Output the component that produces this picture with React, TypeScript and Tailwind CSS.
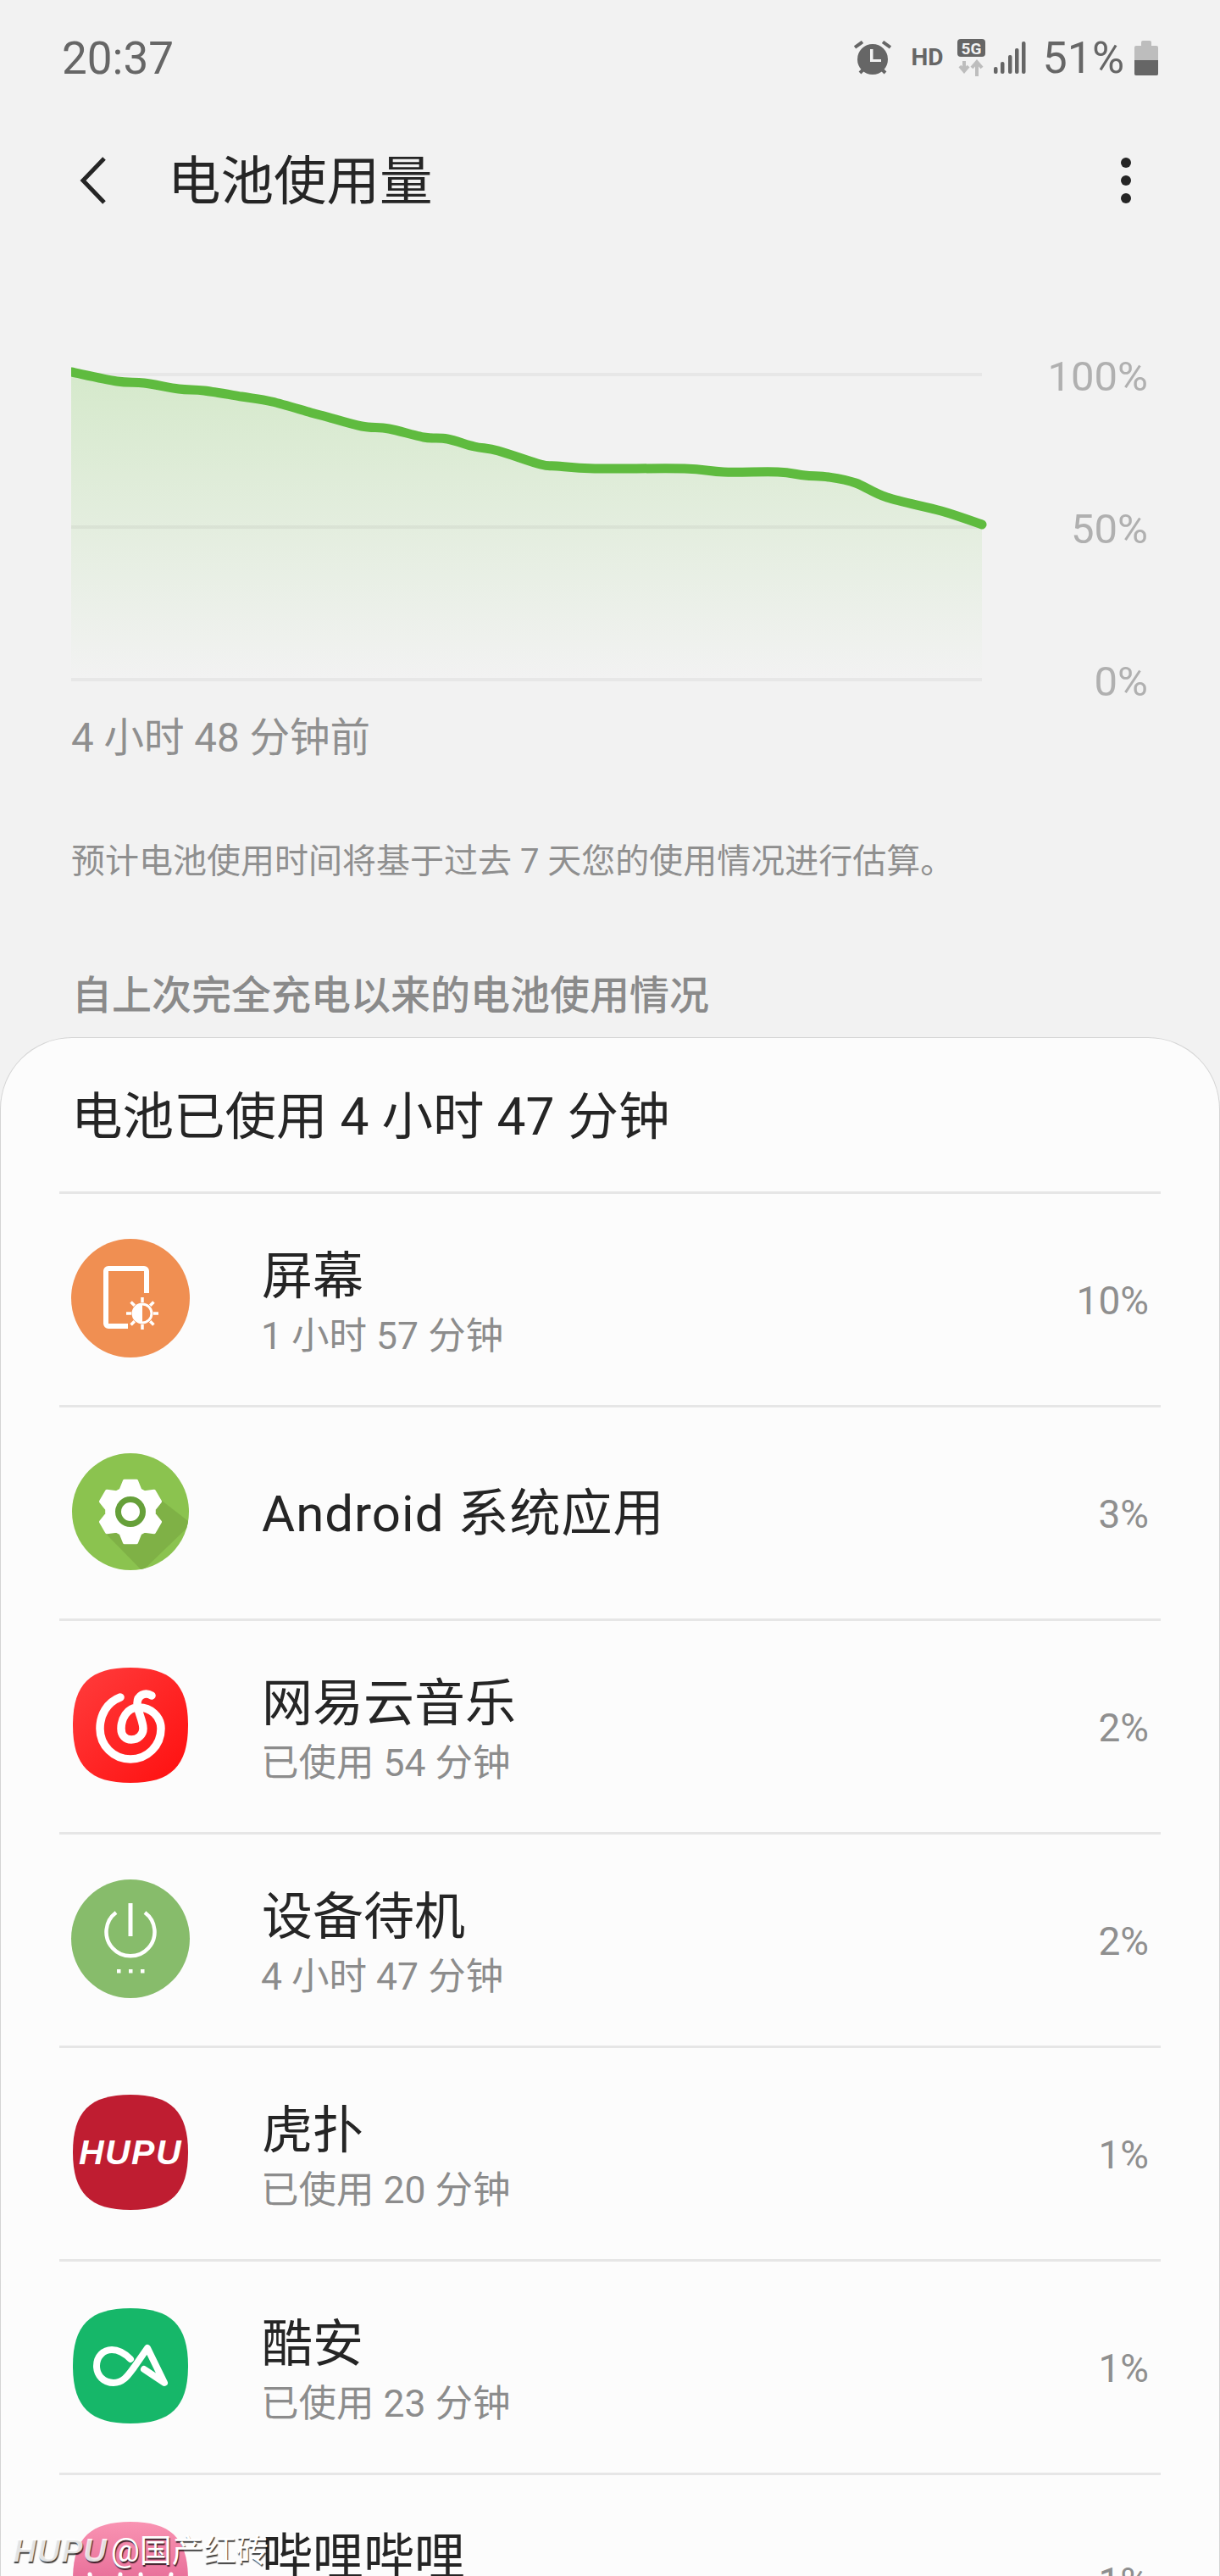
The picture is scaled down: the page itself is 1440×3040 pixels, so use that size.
import type { ReactNode } from 'react'

const CURVE: [number, number][] = [
  [84, 439], [138, 450], [170, 452], [211, 459], [241, 461], [285, 468], [321, 474],
  [367, 487], [386, 492], [427, 503], [459, 506], [500, 516], [528, 518], [560, 527],
  [588, 532], [638, 548], [657, 550], [702, 553], [808, 553], [854, 557], [918, 557],
  [950, 561], [978, 563], [1010, 570], [1047, 587], [1111, 603], [1159, 619],
]

// catmull-rom so the line goes through every measured point
function smoothPath(pts: [number, number][]) {
  let d = `M${pts[0][0]} ${pts[0][1]}`
  for (let i = 0; i < pts.length - 1; i++) {
    const p0 = pts[Math.max(i - 1, 0)]
    const p1 = pts[i]
    const p2 = pts[i + 1]
    const p3 = pts[Math.min(i + 2, pts.length - 1)]
    const c1x = p1[0] + (p2[0] - p0[0]) / 6
    const c1y = p1[1] + (p2[1] - p0[1]) / 6
    const c2x = p2[0] - (p3[0] - p1[0]) / 6
    const c2y = p2[1] - (p3[1] - p1[1]) / 6
    d += ` C${c1x.toFixed(1)} ${c1y.toFixed(1)} ${c2x.toFixed(1)} ${c2y.toFixed(1)} ${p2[0]} ${p2[1]}`
  }
  return d
}

function gearPath(cx: number, cy: number) {
  const pts: string[] = []
  for (let k = 0; k < 6; k++) {
    const a = k * 60 - 90
    const steps: [number, number][] = [[28, a - 24], [37, a - 11], [37, a + 11], [28, a + 24]]
    for (const [r, deg] of steps) {
      const t = (deg * Math.PI) / 180
      pts.push(`${(cx + r * Math.cos(t)).toFixed(1)},${(cy + r * Math.sin(t)).toFixed(1)}`)
    }
  }
  return pts.join(' ')
}

const SQUIRCLE = 'M68 0C116 0 136 20 136 68C136 116 116 136 68 136C20 136 0 116 0 68C0 20 20 0 68 0Z'

function ScreenIcon() {
  const rays = [0, 45, 90, 135, 180, 225, 270, 315]
  return (
    <svg width="140" height="140" viewBox="0 0 140 140">
      <circle cx="70" cy="70" r="70" fill="#f08f52" />
      <path d="M89 64V38a3 3 0 0 0-3-3H44a3 3 0 0 0-3 3V100a3 3 0 0 0 3 3H67" fill="none" stroke="#fff" strokeWidth="6" />
      <circle cx="84" cy="88" r="11" fill="#f08f52" stroke="#fff" strokeWidth="3" />
      <path d="M84 77a11 11 0 0 0 0 22Z" fill="#fff" />
      {rays.map((deg) => (
        <line
          key={deg}
          x1={84 + 13 * Math.cos((deg * Math.PI) / 180)}
          y1={88 + 13 * Math.sin((deg * Math.PI) / 180)}
          x2={84 + 19 * Math.cos((deg * Math.PI) / 180)}
          y2={88 + 19 * Math.sin((deg * Math.PI) / 180)}
          stroke="#fff"
          strokeWidth="3.5"
        />
      ))}
    </svg>
  )
}

function AndroidIcon() {
  return (
    <svg width="140" height="140" viewBox="0 0 140 140">
      <defs>
        <clipPath id="android-clip">
          <circle cx="70" cy="70" r="69" />
        </clipPath>
      </defs>
      <circle cx="70" cy="70" r="69" fill="#8bc34f" />
      <polygon points="40,95 84,140 142,84 107,57" fill="#7fb146" clipPath="url(#android-clip)" />
      <polygon points={gearPath(70, 70)} fill="#fff" stroke="#fff" strokeWidth="4" strokeLinejoin="round" />
      <circle cx="70" cy="70" r="14.5" fill="#fff" stroke="#66a03a" strokeWidth="7" />
    </svg>
  )
}

function MusicIcon() {
  return (
    <svg width="136" height="136" viewBox="0 0 136 136">
      <defs>
        <linearGradient id="netease" x1="0" y1="0" x2="1" y2="1">
          <stop offset="0" stopColor="#ff3d3d" />
          <stop offset="1" stopColor="#ff0f0f" />
        </linearGradient>
      </defs>
      <path d={SQUIRCLE} fill="url(#netease)" />
      <path
        d="M56 35C40 41 32 56 32 72C32 92 48 108 68 108C88 108 104 92 104 72C104 58 92 46 76 47C64 48 57 60 57 72C57 80 62 85 69 85C77 85 83 79 83 72C83 62 76 52 76 42C76 33 85 28 93 33"
        fill="none"
        stroke="#fff"
        strokeWidth="9.5"
        strokeLinecap="round"
      />
    </svg>
  )
}

function StandbyIcon() {
  return (
    <svg width="140" height="140" viewBox="0 0 140 140">
      <circle cx="70" cy="70" r="70" fill="#87bc6b" />
      <rect x="67.5" y="28" width="5" height="39" fill="#fff" />
      <path d="M53 39A28.5 28.5 0 1 0 87 39" fill="none" stroke="#fff" strokeWidth="4.5" />
      <rect x="54" y="106" width="4.5" height="4.5" fill="#fff" />
      <rect x="68" y="106" width="4.5" height="4.5" fill="#fff" />
      <rect x="82" y="106" width="4.5" height="4.5" fill="#fff" />
    </svg>
  )
}

function HupuIcon() {
  return (
    <svg width="136" height="136" viewBox="0 0 136 136">
      <path d={SQUIRCLE} fill="#bf1d31" />
      <text x="68" y="82" textAnchor="middle" fill="#fff" fontFamily="Liberation Sans" fontWeight="700" fontStyle="italic" fontSize="41" letterSpacing="1.5">
        HUPU
      </text>
    </svg>
  )
}

function CoolapkIcon() {
  return (
    <svg width="136" height="136" viewBox="0 0 136 136">
      <path d={SQUIRCLE} fill="#16b769" />
      <path
        d="M68 60C60 52 53 49 46 49C36 49 28 57 28 68C28 80 37 88 48 88C60 88 66 78 72 70L88 47L108 88L84 72"
        fill="none"
        stroke="#fff"
        strokeWidth="8"
        strokeLinejoin="round"
        strokeLinecap="round"
      />
    </svg>
  )
}

function BiliIcon() {
  return (
    <svg width="136" height="136" viewBox="0 0 136 136">
      <defs>
        <linearGradient id="bili" x1="0" y1="0" x2="0" y2="1">
          <stop offset="0" stopColor="#f993b2" />
          <stop offset="0.5" stopColor="#e8709a" />
          <stop offset="1" stopColor="#e8709a" />
        </linearGradient>
      </defs>
      <path d={SQUIRCLE} fill="url(#bili)" />
      <path d="M20 62L24 84M56 62L54 84M80 62L82 84M116 62L112 84" stroke="#fff" strokeWidth="5" strokeLinecap="round" />
    </svg>
  )
}

type Row = { icon: ReactNode; title: string; sub?: string; pct: string }

const ROWS: Row[] = [
  { icon: <ScreenIcon />, title: '屏幕', sub: '1 小时 57 分钟', pct: '10%' },
  { icon: <AndroidIcon />, title: 'Android 系统应用', pct: '3%' },
  { icon: <MusicIcon />, title: '网易云音乐', sub: '已使用 54 分钟', pct: '2%' },
  { icon: <StandbyIcon />, title: '设备待机', sub: '4 小时 47 分钟', pct: '2%' },
  { icon: <HupuIcon />, title: '虎扑', sub: '已使用 20 分钟', pct: '1%' },
  { icon: <CoolapkIcon />, title: '酷安', sub: '已使用 23 分钟', pct: '1%' },
  { icon: <BiliIcon />, title: '哔哩哔哩', sub: '已使用 11 分钟', pct: '1%' },
]

function StatusBar() {
  return (
    <div className="h-[138px] pb-[2px] shrink-0 flex items-center justify-between pl-[73px] pr-[73px] text-[#666666]">
      <span className="text-[53px] leading-none mt-[2px]">20:37</span>
      <div className="flex items-center">
        <svg width="44" height="41" viewBox="0 0 44 41">
          <circle cx="22" cy="22" r="18" fill="#666" />
          <path d="M12 33L7 38M32 33L37 38M1 8L10 1.5M34 1.5L43 8" stroke="#666" strokeWidth="4" />
          <path d="M19 10h3.5v12H32v3H19z" fill="#f2f2f2" />
        </svg>
        <span className="ml-[23px] w-[35px] text-[28px] leading-none font-bold">HD</span>
        <svg className="ml-[20px]" width="33" height="44" viewBox="0 0 33 44">
          <rect x="0" y="0" width="33" height="21" rx="4" fill="#666" />
          <text x="16.5" y="17.5" textAnchor="middle" fill="#f2f2f2" fontFamily="Roboto" fontWeight="700" fontSize="19">5G</text>
          <path d="M8 26v10M3 32l5 6 5-6M23 44V30M17 34l6-7 6 7" fill="none" stroke="#bdbdbd" strokeWidth="4" />
        </svg>
        <svg className="ml-[10px]" width="38" height="38" viewBox="0 0 38 38">
          <rect x="0" y="30" width="4.5" height="8" rx="2" fill="#666" />
          <rect x="8" y="24" width="4.5" height="14" rx="2" fill="#666" />
          <rect x="17" y="16" width="4.5" height="22" rx="2" fill="#666" />
          <rect x="25" y="8" width="4.5" height="30" rx="2" fill="#666" />
          <rect x="33" y="0" width="4.5" height="38" rx="2" fill="#666" />
        </svg>
        <span className="ml-[19px] text-[52px] leading-none mt-[2px]">51%</span>
        <svg className="ml-[12px]" width="28" height="41" viewBox="0 0 28 41">
          <rect x="8" y="0" width="12" height="8" rx="2" fill="#bdbdbd" />
          <rect x="0" y="6" width="28" height="35" rx="2" fill="#bdbdbd" />
          <path d="M0 23h28v16a2 2 0 0 1-2 2H2a2 2 0 0 1-2-2z" fill="#666" />
        </svg>
      </div>
    </div>
  )
}

function Header() {
  return (
    <div className="h-[150px] shrink-0 flex items-center pl-[94px] pr-[105px] text-[#252525]">
      <svg width="32" height="56" viewBox="0 0 32 56">
        <path d="M29 2L4 28L29 54" fill="none" stroke="#252525" strokeWidth="5" />
      </svg>
      <h1 className="ml-[72px] flex-1 text-[62.5px] leading-none font-normal mt-[4px]">电池使用量</h1>
      <div className="flex flex-col gap-[9px]">
        <span className="w-[12px] h-[12px] rounded-full bg-[#252525]" />
        <span className="w-[12px] h-[12px] rounded-full bg-[#252525]" />
        <span className="w-[12px] h-[12px] rounded-full bg-[#252525]" />
      </div>
    </div>
  )
}

function Chart() {
  const line = smoothPath(CURVE)
  return (
    <div className="mt-[132px] h-[408px] shrink-0 flex">
      <svg className="ml-[84px] shrink-0" width="1085" height="408" viewBox="84 420 1085 408">
        <defs>
          <linearGradient id="area" gradientUnits="userSpaceOnUse" x1="0" y1="440" x2="0" y2="800">
            <stop offset="0" stopColor="#d5e9cb" />
            <stop offset="1" stopColor="#f2f2f2" />
          </linearGradient>
        </defs>
        <path d={`${line} L1159 802 L84 802 Z`} fill="url(#area)" />
        <rect x="84" y="440" width="1075" height="4" fill="#000" fillOpacity="0.045" />
        <rect x="84" y="620" width="1075" height="4" fill="#000" fillOpacity="0.045" />
        <rect x="84" y="800" width="1075" height="4" fill="#000" fillOpacity="0.045" />
        <path d={line} fill="none" stroke="#5fbb3f" strokeWidth="11" strokeLinecap="round" strokeLinejoin="round" />
      </svg>
      <div className="flex-1 pt-[2px] pr-[85px] flex flex-col justify-between items-end text-[49px] leading-[46px] text-[#b0b0b0]">
        <span>100%</span>
        <span>50%</span>
        <span>0%</span>
      </div>
    </div>
  )
}

function UsageRow({ row }: { row: Row }) {
  return (
    <div className="h-[252px] shrink-0 border-t-[3px] border-[#e6e6e6] flex items-center pl-[14px] pr-[14px]">
      <div className="w-[140px] flex justify-center -mt-[4px]">{row.icon}</div>
      <div className={row.sub ? 'ml-[85px] flex-1 pt-[9px]' : 'ml-[85px] flex-1 pt-[2px]'}>
        <div className={row.sub ? 'text-[60px] leading-[72px] text-[#252525]' : 'text-[60px] leading-[72px] text-[#252525] tracking-[1px]'}>{row.title}</div>
        {row.sub && <div className="text-[44.5px] leading-[56px] text-[#8c8c8c] mt-[6px] -ml-[1px]">{row.sub}</div>}
      </div>
      <span className="text-[46px] leading-none text-[#8f8f8f] mt-[2px]">{row.pct}</span>
    </div>
  )
}

export default function App() {
  return (
    <div className="relative w-[1440px] h-[3040px] overflow-hidden flex flex-col bg-[#f2f2f2] font-['Roboto','Noto_Sans_CJK_SC',sans-serif]">
      <StatusBar />
      <Header />
      <Chart />
      <p className="mt-[13px] pl-[84px] text-[47.5px] leading-[60px] text-[#8f8f8f]">4 小时 48 分钟前</p>
      <p className="mt-[91px] pl-[84px] text-[40px] leading-[50px] text-[#8f8f8f]">预计电池使用时间将基于过去 7 天您的使用情况进行估算。</p>
      <h2 className="mt-[103px] pl-[85px] text-[47px] leading-[60px] font-medium text-[#8a8a8a]">自上次完全充电以来的电池使用情况</h2>
      <section className="mt-[19px] flex-1 min-h-0 rounded-t-[85px] border border-b-0 border-[#d4d4d4] bg-[#fcfcfc] flex flex-col">
        <div className="h-[181px] shrink-0 flex items-center pl-[83px] pt-[7px] text-[60.5px] leading-none text-[#252525]">电池已使用 4 小时 47 分钟</div>
        <div className="mx-[69px] flex flex-col">
          {ROWS.map((row) => (
            <UsageRow key={row.title} row={row} />
          ))}
        </div>
      </section>
      <div className="absolute left-[15px] top-[2990px] flex items-center text-[38px] leading-[40px] text-white [text-shadow:1px_2px_1px_rgba(0,0,0,0.75)]">
        <span className="italic font-bold text-white/85 font-['Liberation_Sans',sans-serif] tracking-[1px]">HUPU</span>
        <span className="ml-[4px]">@国产红砖</span>
      </div>
    </div>
  )
}
